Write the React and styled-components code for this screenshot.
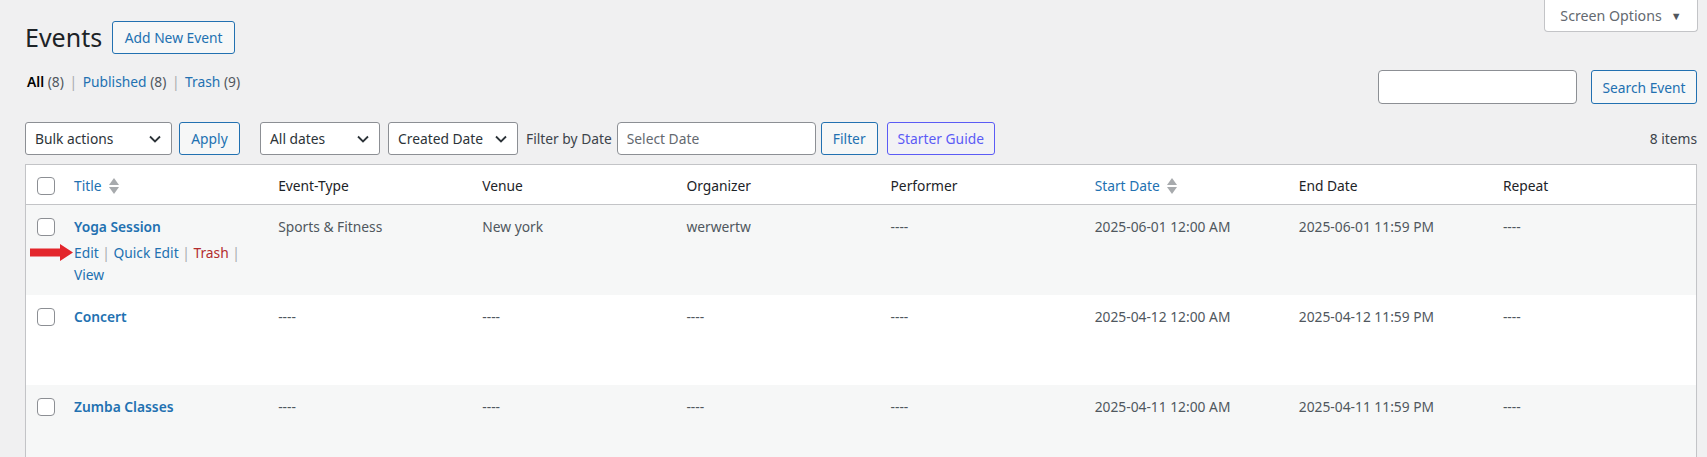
import React from 'react'
import styled, { createGlobalStyle } from 'styled-components'

const GlobalStyle = createGlobalStyle`
  html, body {
    margin: 0;
    padding: 0;
    background: #f0f0f1;
  }
  * { box-sizing: border-box; }
`

const FONT = `"Segoe UI", "Noto Sans", "Open Sans", sans-serif`
const SIZE = '13.8px'

const events = [
  { title: 'Yoga Session', type: 'Sports & Fitness', venue: 'New york', organizer: 'werwertw', performer: '----', start: '2025-06-01 12:00 AM', end: '2025-06-01 11:59 PM', repeat: '----', active: true },
  { title: 'Concert', type: '----', venue: '----', organizer: '----', performer: '----', start: '2025-04-12 12:00 AM', end: '2025-04-12 11:59 PM', repeat: '----' },
  { title: 'Zumba Classes', type: '----', venue: '----', organizer: '----', performer: '----', start: '2025-04-11 12:00 AM', end: '2025-04-11 11:59 PM', repeat: '----' },
]

const Chevron = () => (
  <svg width="12" height="8" viewBox="0 0 12 8" fill="none">
    <path d="M1 1.5 L6 6.5 L11 1.5" stroke="#2c3338" strokeWidth="1.8" />
  </svg>
)

const SortIcon = () => (
  <svg width="10" height="16" viewBox="0 0 10 16">
    <path d="M5 0 L10 7 H0 Z" fill="#a7aaad" />
    <path d="M0 9 H10 L5 16 Z" fill="#a7aaad" />
  </svg>
)

const RedArrow = () => (
  <svg width="44" height="18" viewBox="0 0 44 18">
    <path d="M0 4.5 H30 V0 L43 8.5 L30 17 V12.5 H0 Z" fill="#e3262c" />
  </svg>
)

const App = () => {
  return (
    <Page>
      <GlobalStyle />
      <TopRow>
        <TitleGroup>
          <Heading>Events</Heading>
          <OutlineButton $w={123}>Add New Event</OutlineButton>
        </TitleGroup>
        <ScreenTab>
          Screen Options <TabArrow>▼</TabArrow>
        </ScreenTab>
      </TopRow>

      <FilterRow>
        <Views>
          <Current>All</Current> <Count>(8)</Count> <Sep>|</Sep>{' '}
          <ViewLink>Published</ViewLink> <Count>(8)</Count> <Sep>|</Sep>{' '}
          <ViewLink>Trash</ViewLink> <Count>(9)</Count>
        </Views>
        <SearchBox>
          <TextInput $w={199} />
          <OutlineButton $w={106} $h={34}>Search Event</OutlineButton>
        </SearchBox>
      </FilterRow>

      <Toolbar>
        <Select $w={147}>Bulk actions <Chevron /></Select>
        <OutlineButton $w={61} $ml={7}>Apply</OutlineButton>
        <Select $w={120} $ml={20}>All dates <Chevron /></Select>
        <Select $w={130} $ml={8}>Created Date <Chevron /></Select>
        <FilterLabel>Filter by Date</FilterLabel>
        <TextInput $w={199} $h={33} $ml={5} placeholder="Select Date" />
        <OutlineButton $w={57} $ml={5}>Filter</OutlineButton>
        <GuideButton>Starter Guide</GuideButton>
        <ItemCount>8 items</ItemCount>
      </Toolbar>

      <Table>
        <colgroup>
          <col style={{ width: 37 }} />
          <col /><col /><col /><col /><col /><col /><col /><col />
        </colgroup>
        <thead>
          <tr>
            <HeadCell $check><Box /></HeadCell>
            <HeadCell><SortLink>Title <SortIcon /></SortLink></HeadCell>
            <HeadCell>Event-Type</HeadCell>
            <HeadCell>Venue</HeadCell>
            <HeadCell>Organizer</HeadCell>
            <HeadCell>Performer</HeadCell>
            <HeadCell><SortLink>Start Date <SortIcon /></SortLink></HeadCell>
            <HeadCell>End Date</HeadCell>
            <HeadCell>Repeat</HeadCell>
          </tr>
        </thead>
        <tbody>
          {events.map((ev, i) => (
            <Row key={ev.title} $striped={i % 2 === 0}>
              <Cell $check><Box /></Cell>
              <TitleCell>
                <TitleLink>{ev.title}</TitleLink>
                <RowActions $visible={ev.active}>
                  <ActionLink>Edit</ActionLink> | <ActionLink>Quick Edit</ActionLink> |{' '}
                  <ActionLink $danger>Trash</ActionLink> | <ActionLink>View</ActionLink>
                </RowActions>
                {ev.active && (
                  <ArrowMark>
                    <RedArrow />
                  </ArrowMark>
                )}
              </TitleCell>
              <Cell>{ev.type}</Cell>
              <Cell>{ev.venue}</Cell>
              <Cell>{ev.organizer}</Cell>
              <Cell>{ev.performer}</Cell>
              <Cell>{ev.start}</Cell>
              <Cell>{ev.end}</Cell>
              <Cell>{ev.repeat}</Cell>
            </Row>
          ))}
        </tbody>
      </Table>
    </Page>
  )
}

export default App

const Page = styled.div`
  width: 1707px;
  height: 457px;
  overflow: hidden;
  padding: 0 10px 0 25px;
  font-family: ${FONT};
  font-size: ${SIZE};
  color: #3c434a;
`

const TopRow = styled.div`
  display: flex;
  justify-content: space-between;
  align-items: flex-start;
`

const TitleGroup = styled.div`
  display: flex;
  align-items: center;
  gap: 10px;
  margin-top: 21px;
`

const Heading = styled.h1`
  margin: 0;
  font-size: 25px;
  font-weight: 400;
  line-height: 33px;
  color: #1d2327;
`

const OutlineButton = styled.button`
  display: inline-flex;
  align-items: center;
  justify-content: center;
  width: ${p => p.$w}px;
  height: ${p => p.$h || 33}px;
  margin-left: ${p => p.$ml || 0}px;
  padding: 0;
  border: 1px solid #2271b1;
  border-radius: 3px;
  background: #f6f7f7;
  color: #2271b1;
  font-family: ${FONT};
  font-size: ${SIZE};
  white-space: nowrap;
`

const ScreenTab = styled.div`
  display: flex;
  align-items: center;
  justify-content: center;
  gap: 9px;
  width: 154px;
  height: 32px;
  margin-right: -1px;
  background: #fff;
  border: 1px solid #c3c4c7;
  border-top: none;
  border-radius: 0 0 4px 4px;
  color: #646970;
  font-size: 14.2px;
`

const TabArrow = styled.span`
  font-size: 11px;
  color: #50575e;
`

const FilterRow = styled.div`
  display: flex;
  justify-content: space-between;
  align-items: flex-start;
  margin-top: 16px;
`

const Views = styled.div`
  margin-top: 1px;
  padding-left: 2px;
  line-height: 21px;
  color: #50575e;
`

const Current = styled.span`
  font-weight: 600;
  color: #000;
`

const Count = styled.span`
  color: #50575e;
`

const Sep = styled.span`
  color: #a7aaad;
  padding: 0 2px;
`

const ViewLink = styled.a`
  color: #2271b1;
  text-decoration: none;
`

const SearchBox = styled.div`
  display: flex;
  gap: 14px;
`

const TextInput = styled.input`
  width: ${p => p.$w}px;
  height: ${p => p.$h || 34}px;
  margin: 0 0 0 ${p => p.$ml || 0}px;
  padding: 0 8px 0 9px;
  border: 1px solid #8c8f94;
  border-radius: 4px;
  background: #fff;
  font-family: ${FONT};
  font-size: ${SIZE};
  color: #2c3338;
  &::placeholder { color: #646970; }
`

const Toolbar = styled.div`
  display: flex;
  align-items: center;
  height: 33px;
  margin-top: 18px;
`

const Select = styled.div`
  display: flex;
  align-items: center;
  justify-content: space-between;
  width: ${p => p.$w}px;
  height: 33px;
  margin-left: ${p => p.$ml || 0}px;
  padding: 0 10px 0 9px;
  border: 1px solid #8c8f94;
  border-radius: 3px;
  background: #fff;
  color: #2c3338;
  white-space: nowrap;
`

const FilterLabel = styled.span`
  margin-left: 8px;
  color: #3c434a;
  white-space: nowrap;
`

const GuideButton = styled.button`
  width: 108px;
  height: 33px;
  margin-left: 9px;
  padding: 0;
  border: 1px solid #5b5bf5;
  border-radius: 3px;
  background: #f2f2f5;
  color: #5b5bf5;
  font-family: ${FONT};
  font-size: ${SIZE};
  white-space: nowrap;
`

const ItemCount = styled.span`
  margin-left: auto;
  color: #3c434a;
`

const Table = styled.table`
  width: 100%;
  margin-top: 9px;
  border: 1px solid #c3c4c7;
  border-spacing: 0;
  border-collapse: separate;
  table-layout: fixed;
  background: #fff;
  box-shadow: 0 1px 1px rgba(0, 0, 0, 0.04);
`

const HeadCell = styled.th`
  height: 40px;
  padding: ${p => (p.$check ? '3px 0 0 11px' : '2px 11px 0')};
  border-bottom: 1px solid #c3c4c7;
  text-align: left;
  font-weight: 400;
  color: #1d2327;
  vertical-align: middle;
  white-space: nowrap;
`

const SortLink = styled.a`
  display: inline-flex;
  align-items: center;
  gap: 7px;
  color: #2271b1;
  text-decoration: none;
`

const Box = styled.span`
  display: block;
  width: 18px;
  height: 18px;
  border: 1px solid #8c8f94;
  border-radius: 4px;
  background: #fff;
`

const Row = styled.tr`
  background: ${p => (p.$striped ? '#f6f7f7' : '#fff')};
`

const Cell = styled.td`
  padding: ${p => (p.$check ? '13px 0 0 11px' : '11px 11px 9px')};
  line-height: 21px;
  vertical-align: top;
  color: #50575e;
  white-space: nowrap;
`

const TitleCell = styled(Cell)`
  position: relative;
  white-space: normal;
`

const TitleLink = styled.strong`
  display: block;
  font-weight: 600;
  color: #2271b1;
`

const RowActions = styled.div`
  padding-top: 5px;
  line-height: 22px;
  color: #a7aaad;
  visibility: ${p => (p.$visible ? 'visible' : 'hidden')};
`

const ActionLink = styled.a`
  color: ${p => (p.$danger ? '#b32d2e' : '#2271b1')};
  text-decoration: none;
`

const ArrowMark = styled.span`
  position: absolute;
  left: -33px;
  top: 39px;
  line-height: 0;
`
